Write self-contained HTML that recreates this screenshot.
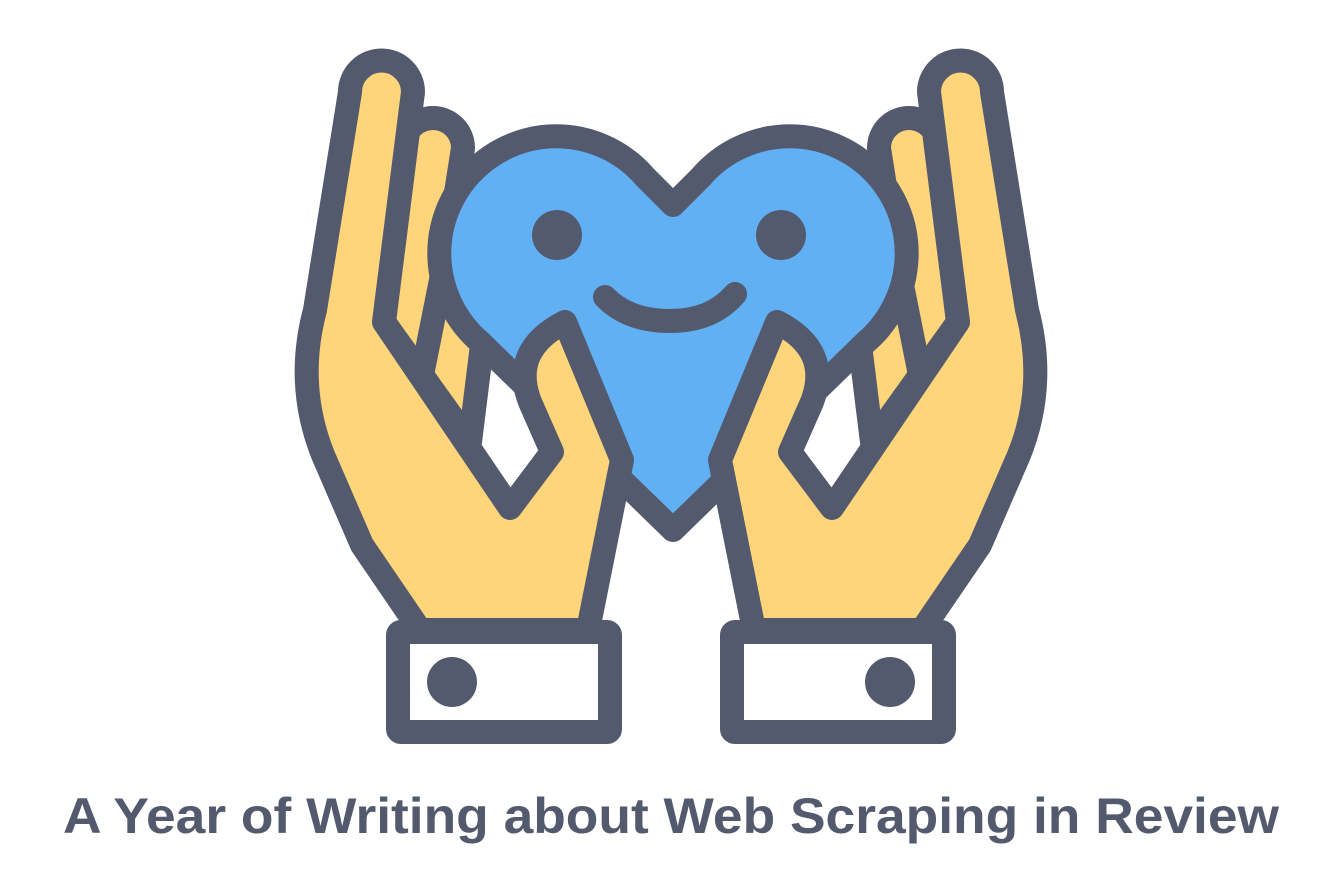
<!DOCTYPE html>
<html><head><meta charset="utf-8"><style>
html,body{margin:0;padding:0;background:#fff;width:1342px;height:894px;overflow:hidden}
svg{display:block}
</style></head><body>
<svg width="1342" height="894" viewBox="0 0 1342 894" xmlns="http://www.w3.org/2000/svg">
<defs>
<g id="hand" stroke="#535a6e" stroke-width="24" stroke-linejoin="round" stroke-linecap="round">
  <path d="M403,148 A30,30 0 0 1 463,148 L447,250 L482,345 L470,442 L384,322 Z" fill="#fed57a"/>
  <path d="M447,250 L420,385" fill="none"/>
</g>
<g id="front" stroke="#535a6e" stroke-width="24" stroke-linejoin="round" stroke-linecap="round">
  <path d="M350,92 A31.5,31.5 0 0 1 413,92 L384,322 L510,508 L552,452 L530,402 Q510,350 565,322 L622,460 L588,630 L420,630 L362,545 L323,455 Q295,385 315,310 Z" fill="#fed57a"/>
  <rect x="398" y="632" width="212" height="100" rx="3" fill="#fff"/>
  <circle cx="452" cy="682" r="25" fill="#535a6e" stroke="none"/>
</g>
</defs>
<use href="#hand"/>
<use href="#hand" transform="translate(1342,0) scale(-1,1)"/>
<path d="M673,205 L645,177 A117,117 0 1 0 480,342 L673,530 L866,342 A117,117 0 1 0 701,177 Z" fill="#62b0f4" stroke="#535a6e" stroke-width="24" stroke-linejoin="round"/>
<circle cx="557" cy="235" r="25" fill="#535a6e"/>
<circle cx="781" cy="235" r="25" fill="#535a6e"/>
<path d="M605,297 Q628,321 670,321 Q712,321 735,294" fill="none" stroke="#535a6e" stroke-width="24" stroke-linecap="round"/>
<use href="#front"/>
<use href="#front" transform="translate(1342,0) scale(-1,1)"/>
<text x="671" y="833" text-anchor="middle" font-family="'Liberation Sans',sans-serif" font-weight="bold" font-size="50" fill="#535a6e" textLength="1216" lengthAdjust="spacingAndGlyphs">A Year of Writing about Web Scraping in Review</text>
</svg>
</body></html>
